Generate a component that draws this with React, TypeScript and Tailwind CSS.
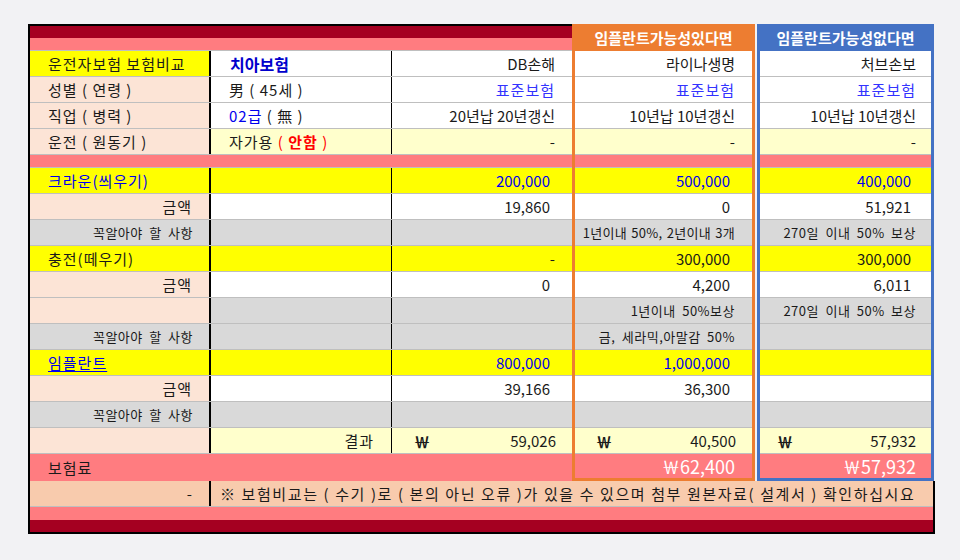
import type { ReactNode } from "react";

const FONT = "font-['Noto_Sans_CJK_KR','Noto_Sans',sans-serif]";
const ROW = "flex h-[26px] border-b border-[#bfbfbf]";

type SideCell = { bg: string; content?: ReactNode; cls?: string };

function Won({ value, left, right }: { value: string; left: string; right: string }) {
  return (
    <div className={`flex h-full w-full items-center justify-between ${left} ${right}`}>
      <span className="text-[16px] font-bold">￦</span>
      <span>{value}</span>
    </div>
  );
}

function LeftRow({
  a,
  aCls,
  b,
  bCls,
  c,
  cCls,
}: {
  a?: ReactNode;
  aCls: string;
  b?: ReactNode;
  bCls: string;
  c?: ReactNode;
  cCls: string;
}) {
  return (
    <div className={ROW}>
      <div className={`flex w-[181px] items-center border-r-2 border-black tracking-[1px] ${aCls}`}>{a}</div>
      <div className={`flex w-[181px] items-center border-r border-black ${bCls}`}>{b}</div>
      <div className={`flex flex-1 items-center justify-end ${cCls}`}>{c}</div>
    </div>
  );
}

function SideColumn({
  title,
  border,
  head,
  cells,
  pad,
  numPad,
  won,
  total,
}: {
  title: string;
  border: string;
  head: string;
  cells: SideCell[];
  pad: string;
  numPad: string;
  won: ReactNode;
  total: string;
}) {
  return (
    <div className={`flex flex-col border-x-[3px] border-b-[3px] ${border}`}>
      <div className={`flex h-[27px] items-center justify-center text-[15px] font-bold text-white ${head}`}>
        {title}
      </div>
      {cells.slice(0, 4).map((c, i) => (
        <div key={i} className={`${ROW} items-center justify-end ${c.bg} ${c.cls ?? pad}`}>
          {c.content}
        </div>
      ))}
      <div className="h-[13px] border-b border-[#bfbfbf] bg-[#ff7c80]" />
      {cells.slice(4).map((c, i) => (
        <div key={i} className={`${ROW} items-center justify-end ${c.bg} ${c.cls ?? numPad}`}>
          {c.content}
        </div>
      ))}
      <div className="flex h-[26px] items-center border-b border-[#bfbfbf] bg-[#ffffcc]">{won}</div>
      <div className={`flex h-[24px] items-center justify-end bg-[#ff7c80] text-[18px] text-white ${pad}`}>
        {total}
      </div>
    </div>
  );
}

const Y = "bg-[#ffff00]";
const W = "bg-white";
const G = "bg-[#d9d9d9]";
const P = "bg-[#fce4d6]";
const L = "bg-[#ffffcc]";
const BLUE = "text-[#0000ee]";
const SMALL = "whitespace-nowrap text-[13px] tracking-[0.5px] [word-spacing:3px]";

export default function App() {
  const orange: SideCell[] = [
    { bg: W, content: "라이나생명" },
    { bg: W, content: <span className="text-[#3333ff] tracking-[1px]">표준보험</span> },
    { bg: W, content: "10년납 10년갱신" },
    { bg: L, content: "-" },
    { bg: Y, content: <span className={BLUE}>500,000</span> },
    { bg: W, content: "0" },
    {
      bg: G,
      content: (
        <span className="whitespace-nowrap text-[13px] tracking-[0.3px] [word-spacing:1px]">
          1년이내 50%, 2년이내 3개
        </span>
      ),
      cls: "pr-[17px]",
    },
    { bg: Y, content: "300,000" },
    { bg: W, content: "4,200" },
    { bg: G, content: <span className={SMALL}>1년이내 50%보상</span>, cls: "pr-[17px]" },
    { bg: G, content: <span className={SMALL}>금, 세라믹,아말감 50%</span>, cls: "pr-[17px]" },
    { bg: Y, content: <span className={BLUE}>1,000,000</span> },
    { bg: W, content: "36,300" },
    { bg: G },
  ];
  const blue: SideCell[] = [
    { bg: W, content: "처브손보" },
    { bg: W, content: <span className="text-[#3333ff] tracking-[1px]">표준보험</span> },
    { bg: W, content: "10년납 10년갱신" },
    { bg: L, content: "-" },
    { bg: Y, content: <span className={BLUE}>400,000</span> },
    { bg: W, content: "51,921" },
    { bg: G, content: <span className={SMALL}>270일 이내 50% 보상</span>, cls: "pr-[15px]" },
    { bg: Y, content: "300,000" },
    { bg: W, content: "6,011" },
    { bg: G, content: <span className={SMALL}>270일 이내 50% 보상</span>, cls: "pr-[15px]" },
    { bg: G },
    { bg: Y },
    { bg: W },
    { bg: G },
  ];

  return (
    <div className={`min-h-[560px] bg-[#f2f2f4] pl-[28px] pt-[24px] text-[15px] leading-none text-[#1a1a1a] ${FONT}`}>
      <div className="flex items-start">
        {/* Columns A-C */}
        <div className="flex w-[544px] flex-col border-l-2 border-t-2 border-black">
          <div className="h-[12px] bg-[#a50021]" />
          <div className="h-[13px] border-b border-[#bfbfbf] bg-[#ff7c80]" />
          <LeftRow
            a="운전자보험 보험비교"
            aCls={`${Y} pl-[18px]`}
            b={<span className="text-[16px] font-bold text-[#0000cc]">치아보험</span>}
            bCls={`${W} pl-[19px]`}
            c="DB손해"
            cCls={`${W} pr-[17px]`}
          />
          <LeftRow
            a="성별 ( 연령 )"
            aCls={`${P} pl-[18px]`}
            b="男 ( 45세 )"
            bCls={`${W} pl-[18px] tracking-[1px]`}
            c={<span className="text-[#3333ff] tracking-[1px]">표준보험</span>}
            cCls={`${W} pr-[17px]`}
          />
          <LeftRow
            a="직업 ( 병력 )"
            aCls={`${P} pl-[18px]`}
            b={
              <span>
                <span className="text-[#0000ee]">02급</span> ( 無 )
              </span>
            }
            bCls={`${W} pl-[18px] tracking-[1px]`}
            c="20년납 20년갱신"
            cCls={`${W} pr-[17px]`}
          />
          <LeftRow
            a="운전 ( 원동기 )"
            aCls={`${P} pl-[18px]`}
            b={
              <span>
                자가용 <span className="text-[#ff0000]">( <b>안함</b> )</span>
              </span>
            }
            bCls={`${L} pl-[18px] tracking-[1px]`}
            c="-"
            cCls={`${L} pr-[17px]`}
          />
          <div className="h-[13px] border-b border-[#bfbfbf] bg-[#ff7c80]" />
          <LeftRow
            a={<span className={BLUE}>크라운(씌우기)</span>}
            aCls={`${Y} pl-[18px]`}
            bCls={Y}
            c={<span className={BLUE}>200,000</span>}
            cCls={`${Y} pr-[22px]`}
          />
          <LeftRow a="금액" aCls={`${P} justify-end pr-[17px]`} bCls={W} c="19,860" cCls={`${W} pr-[22px]`} />
          <LeftRow
            a={<span className={SMALL}>꼭알아야 할 사항</span>}
            aCls={`${G} justify-end pr-[16px]`}
            bCls={G}
            cCls={G}
          />
          <LeftRow a="충전(떼우기)" aCls={`${Y} pl-[18px]`} bCls={Y} c="-" cCls={`${Y} pr-[17px]`} />
          <LeftRow a="금액" aCls={`${P} justify-end pr-[17px]`} bCls={W} c="0" cCls={`${W} pr-[22px]`} />
          <LeftRow aCls={P} bCls={G} cCls={G} />
          <LeftRow
            a={<span className={SMALL}>꼭알아야 할 사항</span>}
            aCls={`${G} justify-end pr-[16px]`}
            bCls={G}
            cCls={G}
          />
          <LeftRow
            a={<span className={`${BLUE} underline underline-offset-2`}>임플란트</span>}
            aCls={`${Y} pl-[18px]`}
            bCls={Y}
            c={<span className={BLUE}>800,000</span>}
            cCls={`${Y} pr-[22px]`}
          />
          <LeftRow a="금액" aCls={`${P} justify-end pr-[17px]`} bCls={W} c="39,166" cCls={`${W} pr-[22px]`} />
          <LeftRow
            a={<span className={SMALL}>꼭알아야 할 사항</span>}
            aCls={`${G} justify-end pr-[16px]`}
            bCls={G}
            cCls={G}
          />
          <LeftRow
            aCls={P}
            b="결과"
            bCls={`${L} justify-end pr-[17px] tracking-[1px]`}
            c={<Won value="59,026" left="pl-[22px]" right="pr-[16px]" />}
            cCls={L}
          />
          <div className="flex h-[27px] items-center bg-[#ff7c80] pl-[18px] tracking-[1px]">보험료</div>
        </div>

        {/* Column D */}
        <div className="w-[183px]">
          <SideColumn
            title="임플란트가능성있다면"
            border="border-[#ed7d31]"
            head="bg-[#ed7d31]"
            cells={orange}
            pad="pr-[17px]"
            numPad="pr-[22px]"
            won={<Won value="40,500" left="pl-[21px]" right="pr-[16px]" />}
            total="￦62,400"
          />
        </div>

        {/* Column E */}
        <div className="ml-[2px] w-[177px]">
          <SideColumn
            title="임플란트가능성없다면"
            border="border-[#4472c4]"
            head="bg-[#4472c4]"
            cells={blue}
            pad="pr-[15px]"
            numPad="pr-[20px]"
            won={<Won value="57,932" left="pl-[17px]" right="pr-[15px]" />}
            total="￦57,932"
          />
        </div>
      </div>

      {/* Footer rows */}
      <div className="w-[907px] border-x-2 border-b-2 border-black">
        <div className="flex h-[26px] border-b border-[#bfbfbf] bg-[#f8cbad]">
          <div className="flex w-[181px] items-center justify-end border-r-2 border-black pr-[17px]">-</div>
          <div className="flex flex-1 items-center pl-[9px] tracking-[1.6px]">
            ※ 보험비교는 ( 수기 )로 ( 본의 아닌 오류 )가 있을 수 있으며 첨부 원본자료( 설계서 ) 확인하십시요
          </div>
        </div>
        <div className="h-[13px] bg-[#ff7c80]" />
        <div className="h-[12px] bg-[#a50021]" />
      </div>
    </div>
  );
}
